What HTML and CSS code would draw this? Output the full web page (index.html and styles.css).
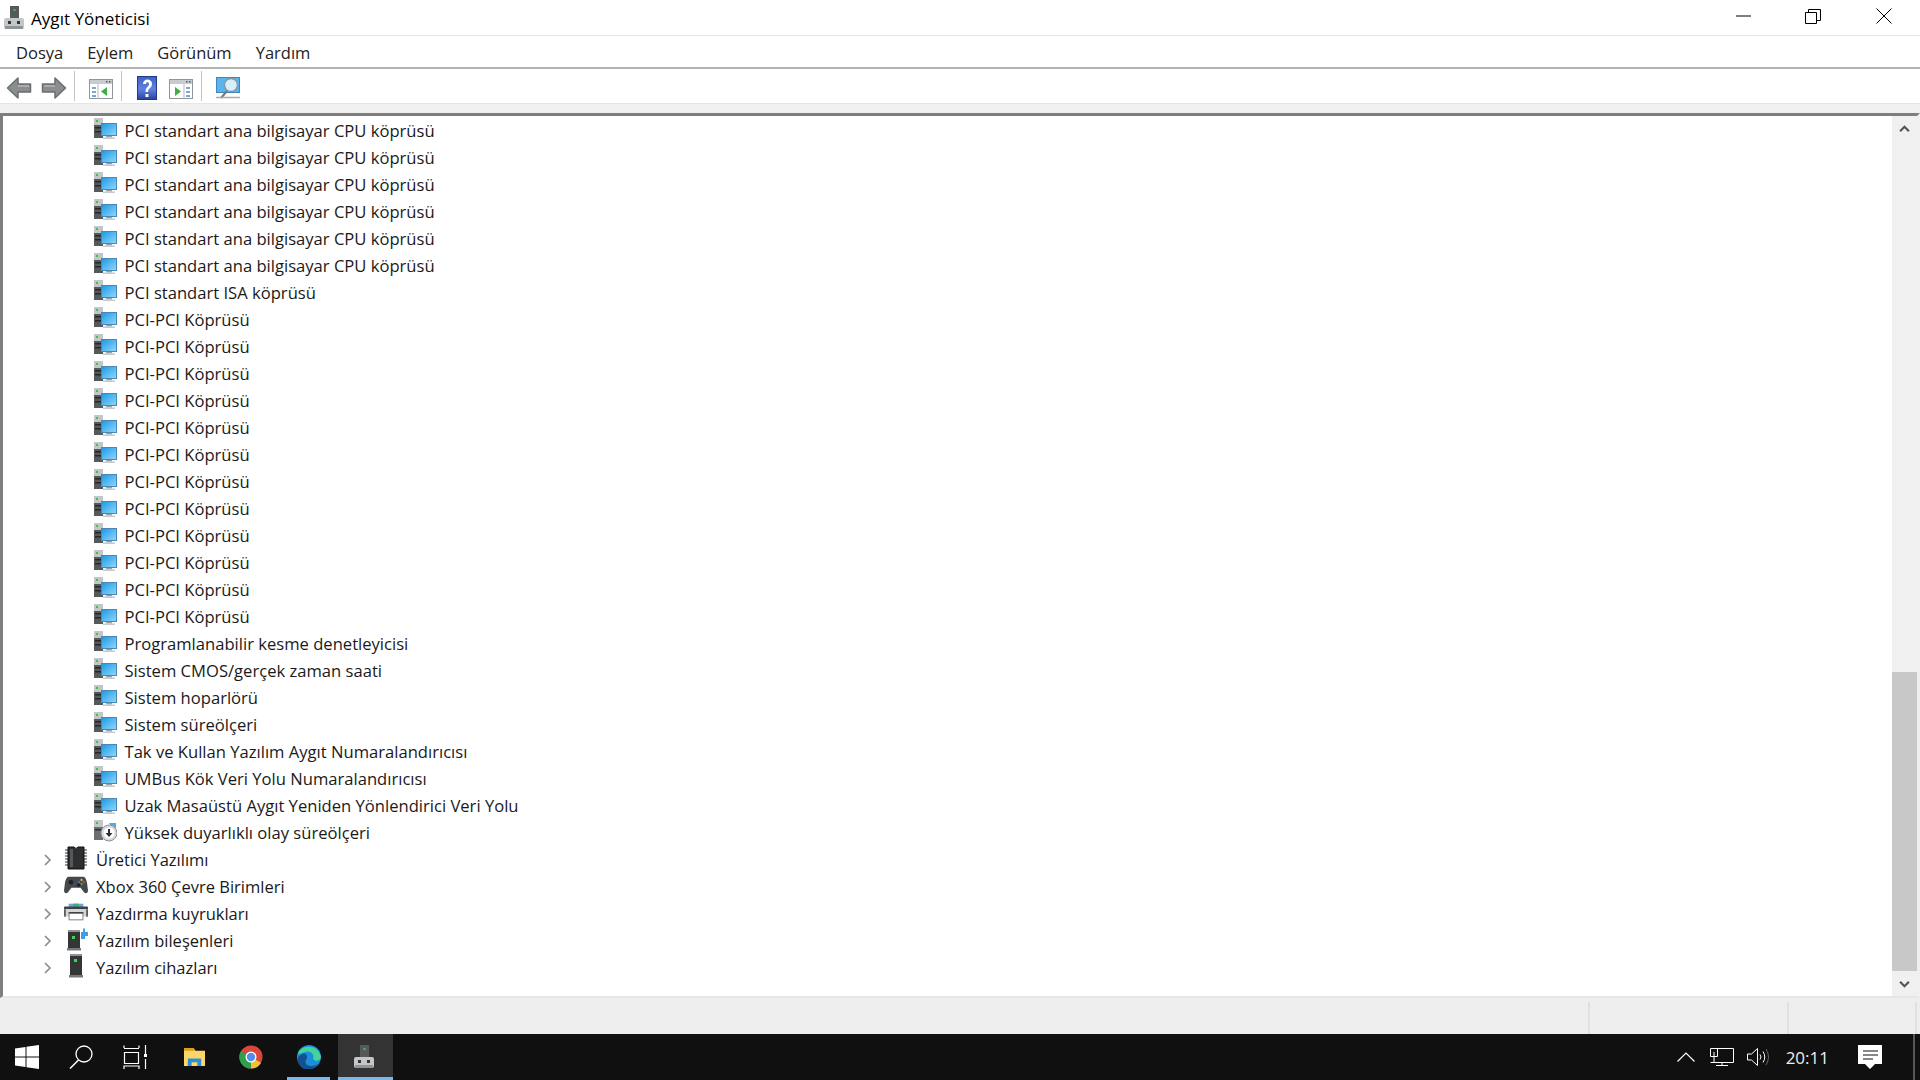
FILE: index.html
```html
<!DOCTYPE html>
<html lang="tr">
<head>
<meta charset="utf-8">
<title>Aygıt Yöneticisi</title>
<link rel="stylesheet" href="styles.css">
</head>
<body>
<svg class="defs" width="0" height="0" aria-hidden="true">
  <defs>
    <linearGradient id="screen" x1="0" y1="0" x2="1" y2="1">
      <stop offset="0" stop-color="#1f9be6"/>
      <stop offset="1" stop-color="#8cd6fa"/>
    </linearGradient>
    <linearGradient id="helpblue" x1="0" y1="0" x2="0" y2="1">
      <stop offset="0" stop-color="#3f63c4"/>
      <stop offset=".55" stop-color="#5f82e0"/>
      <stop offset="1" stop-color="#2b479f"/>
    </linearGradient>
    <symbol id="sys" viewBox="0 0 24 22">
      <rect x="1" y="0" width="9" height="20" fill="#55595c"/>
      <rect x="1" y="0" width="9" height="7" fill="#c3c6c8"/>
      <rect x="3" y="2" width="2" height="2" fill="#3fc04a"/>
      <rect x="2" y="9" width="7" height="1.500" fill="#24272a"/>
      <rect x="2" y="13" width="7" height="1.500" fill="#24272a"/>
      <rect x="8" y="5" width="16" height="13" fill="#4c86b4"/>
      <rect x="9" y="6" width="14" height="11" fill="url(#screen)"/>
      <rect x="13" y="18" width="6" height="1.500" fill="#9aa0a4"/>
      <rect x="10" y="19.500" width="12" height="1.500" fill="#c5cacd"/>
    </symbol>
    <symbol id="timer" viewBox="0 0 24 22">
      <rect x="1" y="0" width="9" height="20" fill="#6b6f72"/>
      <rect x="1" y="0" width="9" height="7" fill="#c3c6c8"/>
      <rect x="3" y="2" width="2" height="2" fill="#3fc04a"/>
      <rect x="2" y="9" width="7" height="1.500" fill="#2b2e30"/>
      <path d="M16 3h7v6h-3z" fill="#5aa9dc"/>
      <circle cx="16" cy="13" r="8" fill="#d7dadc" stroke="#8f9497"/>
      <circle cx="16" cy="13" r="5.500" fill="#fff"/>
      <path d="M15 9h2v4h2.500L16 17l-3.500-4H15z" fill="#2c2f31"/>
    </symbol>
    <symbol id="chip" viewBox="0 0 24 24">
      <path d="M1 4h22M1 7h22M1 10h22M1 13h22M1 16h22M1 19h22" stroke="#777" stroke-width="1.300"/>
      <path d="M4 1h6q2 3 4 0h6v22H4z" fill="#2e2f30" stroke="#111"/>
      <rect x="6" y="3" width="3" height="18" fill="#565859"/>
    </symbol>
    <symbol id="pad" viewBox="0 0 26 20">
      <path d="M6 1h14c3 0 4 2 5 7l1 8c0 3-3 4-5 1l-3-4H8l-3 4c-2 3-5 2-5-1l1-8c1-5 2-7 5-7z" fill="#46494c"/>
      <circle cx="7.500" cy="7" r="2.500" fill="#1f2123"/>
      <circle cx="16" cy="10" r="2" fill="#1f2123"/>
      <circle cx="19" cy="4.500" r="1.200" fill="#e5c33a"/>
      <circle cx="21.500" cy="7" r="1.200" fill="#d04a3c"/>
      <circle cx="16.500" cy="7" r="1.200" fill="#3a7fd0"/>
      <circle cx="19" cy="9" r="1.200" fill="#4cb050"/>
    </symbol>
    <symbol id="printer" viewBox="0 0 26 18">
      <rect x="5" y="0" width="16" height="4" fill="#6fa6da"/>
      <rect x="10" y="0" width="6" height="3" fill="#35b56a"/>
      <rect x="0" y="3" width="26" height="3" rx="1" fill="#3e4245"/>
      <rect x="0" y="6" width="26" height="8" fill="#d5d8da"/>
      <rect x="0" y="6" width="2" height="8" fill="#5a5f62"/>
      <rect x="24" y="6" width="2" height="8" fill="#5a5f62"/>
      <rect x="5" y="9" width="16" height="2" fill="#3e4245"/>
      <rect x="5.500" y="10.500" width="15" height="7" fill="#fff" stroke="#777"/>
    </symbol>
    <symbol id="softcomp" viewBox="0 0 24 24">
      <rect x="4" y="3" width="12" height="18" fill="#333537"/>
      <rect x="4" y="3" width="12" height="2" fill="#8e9396"/>
      <rect x="8" y="9" width="3" height="3" fill="#3dd456"/>
      <rect x="3" y="21" width="14" height="2.500" fill="#75797c"/>
      <path d="M17 5h2V1.500h2V5h3v4h-3v3h-4z" fill="#3f9fe0"/>
    </symbol>
    <symbol id="softdev" viewBox="0 0 24 24">
      <rect x="6" y="0" width="12" height="21" fill="#333537"/>
      <rect x="6" y="0" width="12" height="2" fill="#8e9396"/>
      <rect x="10" y="5" width="3" height="3" fill="#3dd456"/>
      <rect x="5" y="21" width="14" height="2.500" fill="#75797c"/>
    </symbol>
    <symbol id="chev" viewBox="0 0 8 12">
      <path d="M1 1l5 5-5 5" fill="none" stroke="#8a8a8a" stroke-width="1.600"/>
    </symbol>
    <symbol id="devmgr" viewBox="0 0 20 24">
      <rect x="6" y="0" width="9" height="13" fill="#55595c"/>
      <rect x="9.500" y="3" width="2" height="2" fill="#39c44a"/>
      <rect x="0" y="12" width="20" height="11" rx="2" fill="#c4c7c9"/>
      <rect x="4" y="15" width="3" height="3" fill="#333"/>
      <rect x="13" y="15" width="3" height="3" fill="#333"/>
      <rect x="1" y="20" width="18" height="3" fill="#8f9497"/>
    </symbol>
    <symbol id="arrow" viewBox="0 0 26 24">
      <path d="M1.500 12L12 2v6h12.500v8H12v6z" fill="#8b8e8f" stroke="#6a6d6e" stroke-width="1.500" stroke-linejoin="round"/>
      <path d="M12 10h11" stroke="#a9acad" stroke-width="2"/>
    </symbol>
    <symbol id="pane" viewBox="0 0 24 20">
      <rect x=".5" y=".5" width="23" height="19" fill="#fff" stroke="#8f979c"/>
      <rect x="1" y="1" width="22" height="4" fill="#c7ccd0"/>
      <rect x="17" y="2" width="1.500" height="1.500" fill="#555"/>
      <rect x="20" y="2" width="1.500" height="1.500" fill="#555"/>
    </symbol>
  </defs>
</svg>

<div class="window">
  <header class="titlebar">
    <svg class="app-icon"><use href="#devmgr"/></svg>
    <span class="title">Aygıt Yöneticisi</span>
    <div class="caption">
      <svg class="cap-btn cap-min" viewBox="0 0 16 16"><path d="M0 8h15" stroke="#000" fill="none"/></svg>
      <svg class="cap-btn cap-max" viewBox="0 0 16 16"><path d="M.5 4.500h11v11H.5zM3.500 4.500v-3h12v11h-4" stroke="#000" fill="none"/></svg>
      <svg class="cap-btn cap-close" viewBox="0 0 16 16"><path d="M.5.500l15 15M15.500.500l-15 15" stroke="#000" fill="none"/></svg>
    </div>
  </header>

  <nav class="menubar">
    <span class="menu-item">Dosya</span>
    <span class="menu-item">Eylem</span>
    <span class="menu-item">Görünüm</span>
    <span class="menu-item">Yardım</span>
  </nav>

  <div class="toolbar">
    <svg class="tool tool-back"><use href="#arrow"/></svg>
    <svg class="tool tool-fwd flip"><use href="#arrow"/></svg>
    <i class="tool-sep"></i>
    <svg class="tool tool-pane" viewBox="0 0 24 20">
      <use href="#pane"/>
      <path d="M3 8h4v2H3zM3 12h4v2H3zM3 16h4v2H3z" fill="#7fa7d0"/>
      <path d="M9 5v15" stroke="#b3babf"/>
      <path d="M18 8v9l-6-4.500z" fill="#3cb043"/>
    </svg>
    <i class="tool-sep"></i>
    <svg class="tool tool-help" viewBox="0 0 20 24">
      <rect width="20" height="24" fill="#23388a"/>
      <rect x="1" y="1" width="18" height="22" fill="url(#helpblue)"/>
      <path d="M6 8c0-6 9-6 9 0 0 4-4 4-4 8H8.500c0-5 3.500-5 3.500-8 0-2.500-3-2.500-3 0z" fill="#fff"/>
      <rect x="8.500" y="18" width="3" height="3" fill="#fff"/>
    </svg>
    <svg class="tool tool-pane2" viewBox="0 0 24 20">
      <use href="#pane"/>
      <path d="M17 8h4v2h-4zM17 12h4v2h-4zM17 16h4v2h-4z" fill="#7fa7d0"/>
      <path d="M15 5v15" stroke="#b3babf"/>
      <path d="M6 8v9l6-4.500z" fill="#3cb043"/>
    </svg>
    <i class="tool-sep tool-sep3"></i>
    <svg class="tool tool-scan" viewBox="0 0 24 24">
      <rect x=".5" y="1.500" width="23" height="15" fill="#5ab4ee" stroke="#3f86bd"/>
      <path d="M5 22l6-7" stroke="#70787d" stroke-width="2"/>
      <path d="M0 21.500h24" stroke="#a5abae" stroke-width="1.500"/>
      <circle cx="15" cy="9" r="6.500" fill="#d8eefb" stroke="#86959e" stroke-width="1.300"/>
    </svg>
  </div>
  <div class="toolbar-gap"></div>

  <main class="tree-frame">
    <div class="tree">
      <div class="row"><svg class="ico"><use href="#sys"/></svg><span>PCI standart ana bilgisayar CPU köprüsü</span></div>
      <div class="row"><svg class="ico"><use href="#sys"/></svg><span>PCI standart ana bilgisayar CPU köprüsü</span></div>
      <div class="row"><svg class="ico"><use href="#sys"/></svg><span>PCI standart ana bilgisayar CPU köprüsü</span></div>
      <div class="row"><svg class="ico"><use href="#sys"/></svg><span>PCI standart ana bilgisayar CPU köprüsü</span></div>
      <div class="row"><svg class="ico"><use href="#sys"/></svg><span>PCI standart ana bilgisayar CPU köprüsü</span></div>
      <div class="row"><svg class="ico"><use href="#sys"/></svg><span>PCI standart ana bilgisayar CPU köprüsü</span></div>
      <div class="row"><svg class="ico"><use href="#sys"/></svg><span>PCI standart ISA köprüsü</span></div>
      <div class="row"><svg class="ico"><use href="#sys"/></svg><span>PCI-PCI Köprüsü</span></div>
      <div class="row"><svg class="ico"><use href="#sys"/></svg><span>PCI-PCI Köprüsü</span></div>
      <div class="row"><svg class="ico"><use href="#sys"/></svg><span>PCI-PCI Köprüsü</span></div>
      <div class="row"><svg class="ico"><use href="#sys"/></svg><span>PCI-PCI Köprüsü</span></div>
      <div class="row"><svg class="ico"><use href="#sys"/></svg><span>PCI-PCI Köprüsü</span></div>
      <div class="row"><svg class="ico"><use href="#sys"/></svg><span>PCI-PCI Köprüsü</span></div>
      <div class="row"><svg class="ico"><use href="#sys"/></svg><span>PCI-PCI Köprüsü</span></div>
      <div class="row"><svg class="ico"><use href="#sys"/></svg><span>PCI-PCI Köprüsü</span></div>
      <div class="row"><svg class="ico"><use href="#sys"/></svg><span>PCI-PCI Köprüsü</span></div>
      <div class="row"><svg class="ico"><use href="#sys"/></svg><span>PCI-PCI Köprüsü</span></div>
      <div class="row"><svg class="ico"><use href="#sys"/></svg><span>PCI-PCI Köprüsü</span></div>
      <div class="row"><svg class="ico"><use href="#sys"/></svg><span>PCI-PCI Köprüsü</span></div>
      <div class="row"><svg class="ico"><use href="#sys"/></svg><span>Programlanabilir kesme denetleyicisi</span></div>
      <div class="row"><svg class="ico"><use href="#sys"/></svg><span>Sistem CMOS/gerçek zaman saati</span></div>
      <div class="row"><svg class="ico"><use href="#sys"/></svg><span>Sistem hoparlörü</span></div>
      <div class="row"><svg class="ico"><use href="#sys"/></svg><span>Sistem süreölçeri</span></div>
      <div class="row"><svg class="ico"><use href="#sys"/></svg><span>Tak ve Kullan Yazılım Aygıt Numaralandırıcısı</span></div>
      <div class="row"><svg class="ico"><use href="#sys"/></svg><span>UMBus Kök Veri Yolu Numaralandırıcısı</span></div>
      <div class="row"><svg class="ico"><use href="#sys"/></svg><span>Uzak Masaüstü Aygıt Yeniden Yönlendirici Veri Yolu</span></div>
      <div class="row"><svg class="ico"><use href="#timer"/></svg><span>Yüksek duyarlıklı olay süreölçeri</span></div>
      <div class="row cat"><svg class="chev"><use href="#chev"/></svg><svg class="ico"><use href="#chip"/></svg><span>Üretici Yazılımı</span></div>
      <div class="row cat"><svg class="chev"><use href="#chev"/></svg><svg class="ico"><use href="#pad"/></svg><span>Xbox 360 Çevre Birimleri</span></div>
      <div class="row cat"><svg class="chev"><use href="#chev"/></svg><svg class="ico"><use href="#printer"/></svg><span>Yazdırma kuyrukları</span></div>
      <div class="row cat"><svg class="chev"><use href="#chev"/></svg><svg class="ico"><use href="#softcomp"/></svg><span>Yazılım bileşenleri</span></div>
      <div class="row cat"><svg class="chev"><use href="#chev"/></svg><svg class="ico"><use href="#softdev"/></svg><span>Yazılım cihazları</span></div>
    </div>
    <div class="scrollbar">
      <div class="sb-btn"><svg viewBox="0 0 10 7"><path d="M1 5.500l4-4 4 4" fill="none" stroke="#555" stroke-width="2"/></svg></div>
      <div class="sb-track"><div class="sb-thumb"></div></div>
      <div class="sb-btn"><svg viewBox="0 0 10 7"><path d="M1 1.500l4 4 4-4" fill="none" stroke="#555" stroke-width="2"/></svg></div>
    </div>
  </main>

  <footer class="statusbar">
    <div class="st st-main"></div>
    <div class="st st-mid"></div>
    <div class="st st-end"></div>
  </footer>
</div>

<div class="taskbar">
  <div class="tb-item tb-start"><svg viewBox="0 0 24 24"><path d="M0 3.500l10.500-1.500v9.500H0zM11.500 1.800L24 0v11.500H11.500zM0 12.500h10.500V22L0 20.500zM11.500 12.500H24V24l-12.500-1.800z" fill="#fff"/></svg></div>
  <div class="tb-item tb-search"><svg viewBox="0 0 24 24"><circle cx="15" cy="9" r="8" fill="none" stroke="#fff" stroke-width="1.300"/><path d="M9.500 15L1 23.500" stroke="#fff" stroke-width="1.500"/></svg></div>
  <div class="tb-item tb-view"><svg viewBox="0 0 24 24"><path d="M1 3V.500M16 3V.500M1 3.500h15M1.500 7.500h14v11h-14zM1 24v-3h15v3M22.500 0v9M22.500 14v10" fill="none" stroke="#fff" stroke-width="1.200"/><rect x="21" y="9" width="3" height="3" fill="#fff"/></svg></div>
  <div class="tb-item tb-files"><svg viewBox="0 0 24 22"><path d="M1 1h10l2 3h10v16H1z" fill="#fcd667"/><path d="M1 1h10l2 3H1z" fill="#d99f15"/><path d="M5 20v-8h14v8h-4v-4H9v4z" fill="#2a8fdd"/></svg></div>
  <div class="tb-item tb-chrome"><svg viewBox="0 0 24 24"><circle cx="12" cy="12" r="11.500" fill="#d9473c"/><path d="M12 12L22 17.700A11.500 11.500 0 0 1 12 23.500z" fill="#f3c230"/><path d="M12 12L2 6A11.500 11.500 0 0 0 12 23.500z" fill="#2f9e4f"/><circle cx="12" cy="12" r="5.500" fill="#fff"/><circle cx="12" cy="12" r="4.200" fill="#4e8fee"/></svg></div>
  <div class="tb-item tb-edge"><svg viewBox="0 0 24 24"><circle cx="12" cy="12" r="12" fill="#1a8fd8"/><path d="M1 9C3 0 21-2 24 12c0 4-6 5-8 2 2-5-3-9-8-7-3 1-5 2-7 2z" fill="#45d39a"/><path d="M7 24C0 20-2 12 5 9c5-2 6 3 4 6s1 6 6 6c2 0 4-1 6-2-4 5-9 7-14 5z" fill="#12508f"/></svg><i class="tb-line"></i></div>
  <div class="tb-item tb-app"><svg><use href="#devmgr"/></svg><i class="tb-line"></i></div>
  <div class="tray">
    <svg class="tray-chev" viewBox="0 0 18 10"><path d="M.5 9.500L9 1l8.500 8.500" fill="none" stroke="#fff" stroke-width="1.200"/></svg>
    <svg class="tray-net" viewBox="0 0 24 18"><path d="M.5.500h23v14h-23M.5.500v8h7V.500M4 4v11M12 15v2.500M6 17.500h12M4 5h0" fill="none" stroke="#fff" stroke-width="1"/></svg>
    <svg class="tray-vol" viewBox="0 0 22 18"><path d="M.5 6v6h4l6 5.500V.500l-6 5.500z" fill="none" stroke="#fff"/><path d="M13 6.500q2 2.500 0 5M16 3.500q3.500 5.500 0 11" fill="none" stroke="#fff"/><path d="M19 1q5 8 0 16" fill="none" stroke="#666"/></svg>
    <span class="clock">20:11</span>
    <svg class="tray-msg" viewBox="0 0 24 24"><path d="M0 0h24v19h-7l-5 5-5-5H0z" fill="#fff"/><path d="M5 6h15M5 10h15M5 14h10" stroke="#111" stroke-width="1.200"/></svg>
    <i class="show-desktop"></i>
  </div>
</div>
</body>
</html>
```

FILE: styles.css
```css
* { box-sizing: border-box; }
html, body { margin: 0; height: 100%; overflow: hidden; }
body {
  display: flex;
  flex-direction: column;
  width: 1920px;
  height: 1080px;
  background: #fff;
  color: #111;
  font-family: "Open Sans", "Noto Sans", "Liberation Sans", sans-serif;
  font-size: 16.6px;
}
.defs { display: block; height: 0; }
.window { flex: 1; display: flex; flex-direction: column; min-height: 0; }

.titlebar { height: 36px; display: flex; align-items: center; padding-left: 4px; padding-top: 2px; border-bottom: 1px solid #e6e6e6; }
.app-icon { width: 20px; height: 24px; margin-right: 7px; flex: none; margin-top: -2px; }
.title { font-size: 17.1px; color: #000; }
.caption { margin-left: auto; display: flex; align-items: center; padding-right: 28px; margin-top: -5px; }
.cap-btn { width: 16px; height: 16px; }
.cap-max { margin-left: 53px; }
.cap-close { margin-left: 55px; }

.menubar { height: 33px; display: flex; align-items: center; padding-left: 16px; padding-top: 2px; gap: 24px; border-bottom: 2px solid #b4b4b4; }
.menu-item { font-size: 16.5px; color: #222; }

.toolbar { height: 34px; display: flex; align-items: center; padding-left: 6px; padding-top: 4px; }
.tool { display: block; flex: none; }
.tool-back, .tool-fwd { width: 26px; height: 24px; }
.tool-fwd { margin-left: 9px; }
.flip { transform: scaleX(-1); }
.tool-sep { width: 1px; height: 30px; background: #c4c4c4; flex: none; margin-left: 7px; margin-top: -4px; }
.tool-pane { width: 24px; height: 20px; margin-left: 14px; margin-top: 2px; }
.tool-help { width: 20px; height: 24px; margin-left: 15px; }
.tool-pane + .tool-sep { margin-left: 8px; }
.tool-pane2 { width: 24px; height: 20px; margin-left: 12px; margin-top: 2px; }
.tool-sep3 { margin-left: 8px; }
.tool-scan { width: 24px; height: 24px; margin-left: 14px; }
.toolbar-gap { height: 10px; background: #f0f0f0; border-top: 1px solid #e6e6e6; }

.tree-frame {
  flex: 1;
  min-height: 0;
  display: flex;
  border-top: 3px solid #7e7e7e;
  border-left: 3px solid #7e7e7e;
  border-right: 3px solid #f0f0f0;
  border-bottom: 2px solid #e6e6e6;
}
.tree { flex: 1; padding-top: 1px; overflow: hidden; }
.row { height: 27px; display: flex; align-items: center; padding-left: 90px; white-space: nowrap; font-size: 16.6px; color: #1a1a1a; }
.row .ico { width: 24px; height: 22px; margin-right: 7.5px; flex: none; margin-top: -3px; }
.row.cat { padding-left: 41px; font-size: 16.5px; }
.chev { width: 8px; height: 12px; margin-right: 12px; flex: none; }
.row.cat .ico { width: 24px; height: 24px; margin-right: 8px; }

.scrollbar { width: 25px; display: flex; flex-direction: column; background: #f0f0f0; }
.sb-btn { height: 25px; display: flex; align-items: center; justify-content: center; flex: none; }
.sb-btn svg { width: 11px; height: 8px; }
.sb-track { flex: 1; display: flex; flex-direction: column; justify-content: flex-end; }
.sb-thumb { height: 299px; background: #c8c8c8; }

.statusbar { height: 36px; display: flex; background: #eee; padding: 4px 3px 0 0; }
.st { border-right: 2px solid #e0e0e0; }
.st-main { width: 1590px; }
.st-mid { width: 199px; }
.st-end { flex: 1; }

.taskbar { height: 46px; flex: none; display: flex; background: #101010; color: #fff; position: relative; }
.tb-item { display: flex; align-items: center; justify-content: center; position: relative; height: 46px; flex: none; }
.tb-start { width: 54px; }
.tb-start svg { width: 24px; height: 24px; }
.tb-search { width: 54px; }
.tb-search svg { width: 24px; height: 24px; }
.tb-view { width: 54px; }
.tb-view svg { width: 24px; height: 24px; }
.tb-files { width: 64px; }
.tb-files svg { width: 23px; height: 21px; }
.tb-chrome { width: 49px; }
.tb-chrome svg { width: 24px; height: 24px; }
.tb-edge { width: 43px; margin-left: 12px; }
.tb-edge svg { width: 24px; height: 24px; }
.tb-app { width: 55px; margin-left: 8px; padding-right: 3px; background: #333; }
.tb-app svg { width: 20px; height: 24px; }
.tb-line { position: absolute; left: 0; right: 0; bottom: 0; height: 3px; background: #76b9ed; }
.tray { margin-left: auto; display: flex; align-items: center; }
.tray-chev { width: 18px; height: 10px; margin-right: 15px; }
.tray-net { width: 24px; height: 18px; margin-right: 13px; }
.tray-vol { width: 22px; height: 18px; margin-right: 17px; }
.clock { font-size: 17px; color: #eee; margin-right: 29px; }
.tray-msg { width: 24px; height: 24px; margin-right: 31px; }
.show-desktop { width: 2px; height: 46px; background: #555; margin-right: 5px; }
```
